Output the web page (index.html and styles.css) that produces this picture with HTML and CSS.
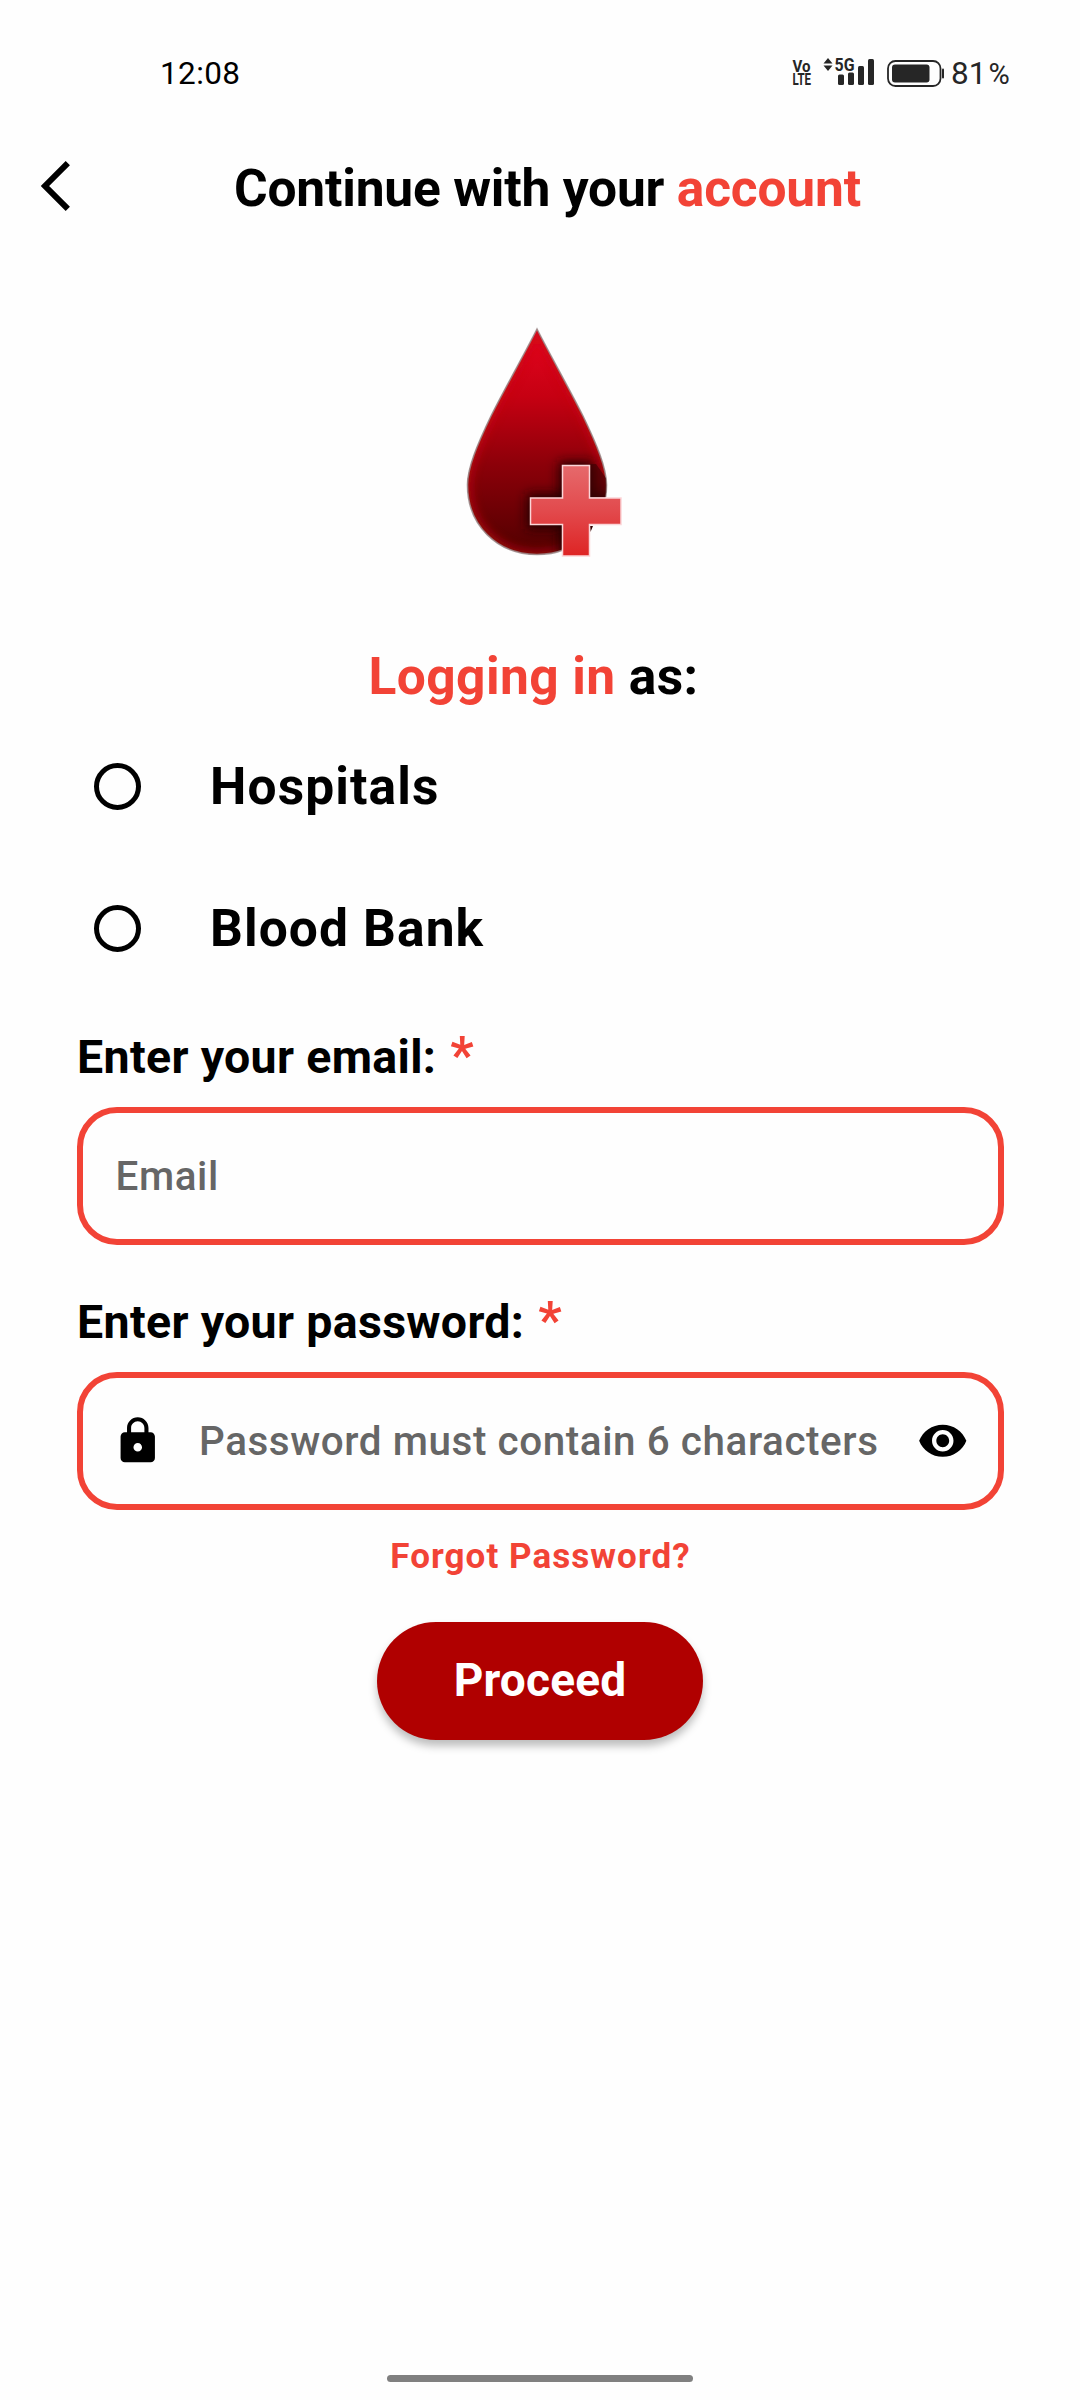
FILE: index.html
```html
<!DOCTYPE html>
<html lang="en">
<head>
<meta charset="utf-8">
<title>Login</title>
<link rel="stylesheet" href="styles.css">
</head>
<body>
<div class="screen">
  <div class="status">
    <span class="time">12:08</span>
    <div class="indicators">
      <svg class="signal" width="155" height="44" viewBox="790 51.500 155 44" fill="#262626">
        <text x="792.500" y="71" class="net small" textLength="18" lengthAdjust="spacingAndGlyphs">Vo</text>
        <text x="792.500" y="84.700" class="net small" textLength="18.500" lengthAdjust="spacingAndGlyphs">LTE</text>
        <path d="M823.500 63 828 57.500 832.500 63ZM823.500 65 828 70.500 832.500 65Z"/>
        <text x="834.500" y="70.300" class="net" textLength="20" lengthAdjust="spacingAndGlyphs">5G</text>
        <rect x="838" y="74" width="6" height="10.500" rx="1.500"/>
        <rect x="848" y="72" width="6" height="12.500" rx="1.500"/>
        <rect x="858" y="65.500" width="6" height="19" rx="1.500"/>
        <rect x="868" y="58.500" width="6" height="26" rx="1.500"/>
        <rect x="888" y="60.500" width="52.500" height="25" rx="7.500" fill="none" stroke="#262626" stroke-width="1.800"/>
        <rect x="892" y="64" width="37.500" height="18" rx="3"/>
        <rect x="942" y="68" width="2" height="10" rx="1"/>
      </svg>
      <span class="percent">81<small>%</small></span>
    </div>
  </div>
  <header class="header">
    <svg class="back" width="32" height="52" viewBox="0 0 32 52" fill="none" stroke="#000" stroke-width="6"><path d="M27.800 3.200 5 26 27.800 48.800"/></svg>
    <h1 class="title">Continue with your <span class="accent">account</span></h1>
  </header>
  <svg class="logo" width="220" height="270" viewBox="440 310 220 270">
    <defs>
      <linearGradient id="drop" x1="0" y1="329" x2="0" y2="555" gradientUnits="userSpaceOnUse">
        <stop offset="0" stop-color="#e6051f"/><stop offset=".3" stop-color="#c60012"/><stop offset=".6" stop-color="#8c0009"/><stop offset="1" stop-color="#500000"/>
      </linearGradient>
      <linearGradient id="cross" x1="0" y1="465" x2="0" y2="556" gradientUnits="userSpaceOnUse">
        <stop offset="0" stop-color="#e66a6c"/><stop offset=".5" stop-color="#e24a4d"/><stop offset="1" stop-color="#de2424"/>
      </linearGradient>
      <filter id="soft" x="-30%" y="-30%" width="160%" height="160%"><feGaussianBlur stdDeviation="5"/></filter>
      <filter id="shade" x="-30%" y="-30%" width="160%" height="160%"><feGaussianBlur stdDeviation="6"/></filter>
      <clipPath id="inside"><path d="M537 329C549 353 570 390 583 416C597 445 606.500 468 606.500 485C606.500 526 576 554.500 537 554.500C498 554.500 467.500 526 467.500 485C467.500 468 477 445 491 416C504 390 525 353 537 329Z"/></clipPath>
    </defs>
    <g clip-path="url(#inside)">
      <rect x="460" y="320" width="155" height="240" fill="url(#drop)"/>
      <path d="M537 329C549 353 570 390 583 416C597 445 606.500 468 606.500 485C606.500 526 576 554.500 537 554.500C498 554.500 467.500 526 467.500 485C467.500 468 477 445 491 416C504 390 525 353 537 329Z" fill="none" stroke="#c80a18" stroke-width="8" opacity=".7" filter="url(#soft)"/>
      <path d="M559 462H593V494H625V529H593V560H559V529H527V494H559Z" fill="#200" filter="url(#shade)"/>
    </g>
    <path d="M537 329C549 353 570 390 583 416C597 445 606.500 468 606.500 485C606.500 526 576 554.500 537 554.500C498 554.500 467.500 526 467.500 485C467.500 468 477 445 491 416C504 390 525 353 537 329Z" fill="none" stroke="#9a8888" stroke-width="1.600" opacity=".85"/>
    <path d="M564 555.500V525.500H590V556H600L608 520V497H589V490Z" fill="#fefefe"/>
    <path d="M589 464V498H607C606.500 490 607 485 606 478L596 464Z" fill="#3a0204" opacity=".6" clip-path="url(#inside)"/>
    <path d="M590 526H593L590.500 532Z" fill="#300"/>
    <path d="M562.500 465.500H589.500V498H621V524.500H589.500V556H562.500V524.500H530.500V498H562.500Z" fill="url(#cross)" stroke="#fbd5d8" stroke-width="1.500"/>
  </svg>
  <h2 class="as"><span class="accent">Logging in</span> as:</h2>
  <div class="options">
    <div class="option"><i class="radio"></i><span>Hospitals</span></div>
    <div class="option"><i class="radio"></i><span>Blood Bank</span></div>
  </div>
  <div class="label"><span>Enter your email:</span><span class="star">*</span></div>
  <div class="field email"><span class="hint">Email</span></div>
  <div class="label second"><span>Enter your password:</span><span class="star">*</span></div>
  <div class="field">
    <svg class="lock" width="51.500" height="51.500" viewBox="0 0 24 24"><path d="M18 8h-1V6c0-2.760-2.240-5-5-5S7 3.240 7 6v2H6c-1.100 0-2 .9-2 2v10c0 1.100.9 2 2 2h12c1.100 0 2-.9 2-2V10c0-1.100-.9-2-2-2zm-6 9c-1.100 0-2-.9-2-2s.9-2 2-2 2 .9 2 2-.9 2-2 2zm3.100-9H8.900V6c0-1.710 1.390-3.100 3.100-3.100 1.710 0 3.100 1.390 3.100 3.100v2z"/></svg>
    <span class="hint">Password must contain 6 characters</span>
    <svg class="eye" width="51.500" height="51.500" viewBox="0 0 24 24"><path d="M12 4.500C7 4.500 2.730 7.610 1 12c1.730 4.390 6 7.500 11 7.500s9.270-3.110 11-7.500c-1.730-4.390-6-7.500-11-7.500zM12 17c-2.760 0-5-2.240-5-5s2.240-5 5-5 5 2.240 5 5-2.240 5-5 5zm0-8c-1.660 0-3 1.340-3 3s1.340 3 3 3 3-1.340 3-3-1.340-3-3-3z"/></svg>
  </div>
  <a class="forgot">Forgot Password?</a>
  <button class="proceed">Proceed</button>
  <div class="home"></div>
</div>
</body>
</html>
```
FILE: styles.css
```css
* { box-sizing: border-box; }
body { margin: 0; background: #fefefe; color: #000; font-family: Roboto, sans-serif; }
.screen { width: 1080px; height: 2400px; display: flex; flex-direction: column; align-items: center; }
.accent { color: #f24336; }
.status { width: 100%; height: 147px; padding: 0 0 0 160px; display: flex; align-items: center; font-size: 31.5px; }
.time { width: 630px; letter-spacing: 0.4px; }
.indicators { display: flex; align-items: center; gap: 6px; color: #262626; }
.signal { overflow: visible; }
.net { font: 700 18px Roboto, sans-serif; }
.net.small { font-size: 16.5px; }
.percent small { font-size: 29px; margin-left: 2px; }
.header { width: 100%; height: 83px; display: flex; align-items: center; padding-left: 40px; }
.back { margin: 0 162px 5px 0; }
.title { margin: 0; font-size: 51.5px; font-weight: 700; letter-spacing: -0.2px; white-space: nowrap; }
.logo { margin: 80px 0 67px 20px; }
.as { margin: 0 13px 0 0; font-size: 51.5px; line-height: 60px; font-weight: 700; letter-spacing: 0.4px; }
.options { width: 100%; padding: 8px 0 27px 94px; }
.option { height: 142.5px; display: flex; align-items: center; gap: 69px; font-size: 51.5px; font-weight: 700; letter-spacing: 1.1px; }
.radio { width: 47px; height: 47px; border: 5px solid #000; border-radius: 50%; }
.label { width: 926px; height: 60px; margin-bottom: 20px; display: flex; align-items: baseline; gap: 14px; font-size: 46.5px; line-height: 58px; font-weight: 700; letter-spacing: 0.33px; }
.star { color: #f24336; font-size: 51.5px; font-weight: 700; }
.second { margin-top: 47px; }
.field { width: 927px; height: 138px; border: 6px solid #f24336; border-radius: 40px; padding: 0 29px; display: flex; align-items: center; }
.field.email { padding-left: 33px; }
.hint { color: #666; font-size: 40.4px; font-weight: 500; letter-spacing: 0.58px; white-space: nowrap; }
.lock { margin-right: 36px; }
.eye { margin-left: auto; }
.forgot { margin: 27px 0 45px 1px; color: #f24336; font-size: 35px; line-height: 40px; font-weight: 700; letter-spacing: 1.05px; }
.proceed { width: 326px; height: 118px; padding: 0 0 2px; border: 0; border-radius: 59px; background: #b00000; color: #fff; font: 700 46px Roboto, sans-serif; letter-spacing: 0.2px; box-shadow: 0 6px 8px rgba(0,0,0,.26); }
.home { width: 306px; height: 7px; border-radius: 4px; background: #808080; margin: auto 0 18px; }
```
